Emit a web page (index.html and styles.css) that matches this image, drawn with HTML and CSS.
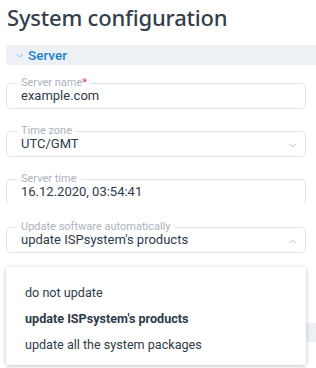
FILE: index.html
```html
<!DOCTYPE html>
<html>
<head>
<meta charset="utf-8">
<link rel="stylesheet" href="styles.css">
</head>
<body>
<div class="page">
  <h1 class="title">System configuration</h1>
  <div class="section-head">
    <svg class="chev" width="7" height="5" viewBox="0 0 7 5"><path d="M0.5 1 L3.5 4 L6.5 1" fill="none" stroke="#7fb6e0" stroke-width="1"/></svg>
    <span>Server</span>
  </div>
  <div class="fields">
    <fieldset class="field">
      <legend>Server name<span class="req">*</span></legend>
      <div class="value">example.com</div>
    </fieldset>
    <fieldset class="field">
      <legend>Time zone</legend>
      <div class="value">UTC/GMT</div>
      <svg class="arrow" width="7" height="5" viewBox="0 0 7 5"><path d="M0.5 1 L3.5 4 L6.5 1" fill="none" stroke="#b8c0c8" stroke-width="1"/></svg>
    </fieldset>
    <fieldset class="field readonly">
      <legend>Server time</legend>
      <div class="value">16.12.2020, 03:54:41</div>
    </fieldset>
    <fieldset class="field">
      <legend>Update software automatically</legend>
      <div class="value">update ISPsystem's products</div>
      <svg class="arrow" width="7" height="5" viewBox="0 0 7 5"><path d="M0.5 4 L3.5 1 L6.5 4" fill="none" stroke="#b8c0c8" stroke-width="1"/></svg>
    </fieldset>
  </div>
  <div class="section-head next"></div>
  <ul class="menu">
    <li>do not update</li>
    <li class="selected">update ISPsystem's products</li>
    <li>update all the system packages</li>
  </ul>
</div>
</body>
</html>
```
FILE: styles.css
```css
html {
  overflow: hidden;
}
html, body {
  margin: 0;
  padding: 0;
  background: #ffffff;
}
body {
  font-family: Roboto, "Noto Sans", sans-serif;
  color: #2e3b49;
  height: 368px;
}
.page {
  position: relative;
  padding: 0 0 0 6px;
  width: 310px;
  height: 368px;
}
.title {
  margin: 0;
  padding: 2px 0 0 1px;
  font-family: "Noto Sans", "Open Sans", sans-serif;
  font-size: 22px;
  line-height: 30px;
  font-weight: 500;
  color: #333f4c;
  letter-spacing: -0.2px;
}
.section-head {
  margin-top: 13px;
  height: 20px;
  background: #edf1f5;
  border-radius: 4px 0 0 4px;
  display: flex;
  align-items: center;
  padding-left: 10px;
  gap: 5px;
}
.section-head span {
  font-size: 13.5px;
  font-weight: 500;
  color: #1d82c8;
  line-height: 20px;
}
.section-head .chev {
  margin-top: 1px;
}
.section-head.next {
  margin-top: 70px;
  height: 19px;
}
.fields {
  width: 300px;
  display: flex;
  flex-direction: column;
  gap: 17px;
  margin-top: 13px;
}
.field {
  position: relative;
  margin: 0;
  border: 1px solid #dde2e7;
  border-radius: 5px;
  padding: 0 0 4px 14px;
  min-width: 0;
}
.field.readonly {
  border-bottom-color: transparent;
}
.field legend {
  font-size: 11px;
  line-height: 10px;
  height: 10px;
  color: #aab3bd;
  padding: 0 4px;
  margin-left: -4px;
}
.req {
  color: #e4337e;
}
.value {
  font-size: 13px;
  line-height: 16px;
  color: #2e3b49;
}
.arrow {
  position: absolute;
  right: 9px;
  top: 7px;
}
.menu {
  position: absolute;
  left: 6px;
  top: 267px;
  width: 300px;
  height: 98px;
  margin: 0;
  padding: 13px 0 0 0;
  list-style: none;
  background: #ffffff;
  border-radius: 3px;
  box-shadow: 0 1px 4px rgba(60, 75, 95, 0.35);
  box-sizing: border-box;
}
.menu li {
  font-size: 12.6px;
  line-height: 26px;
  padding-left: 19px;
  color: #2e3b49;
}
.menu li.selected {
  font-weight: 700;
}
```
